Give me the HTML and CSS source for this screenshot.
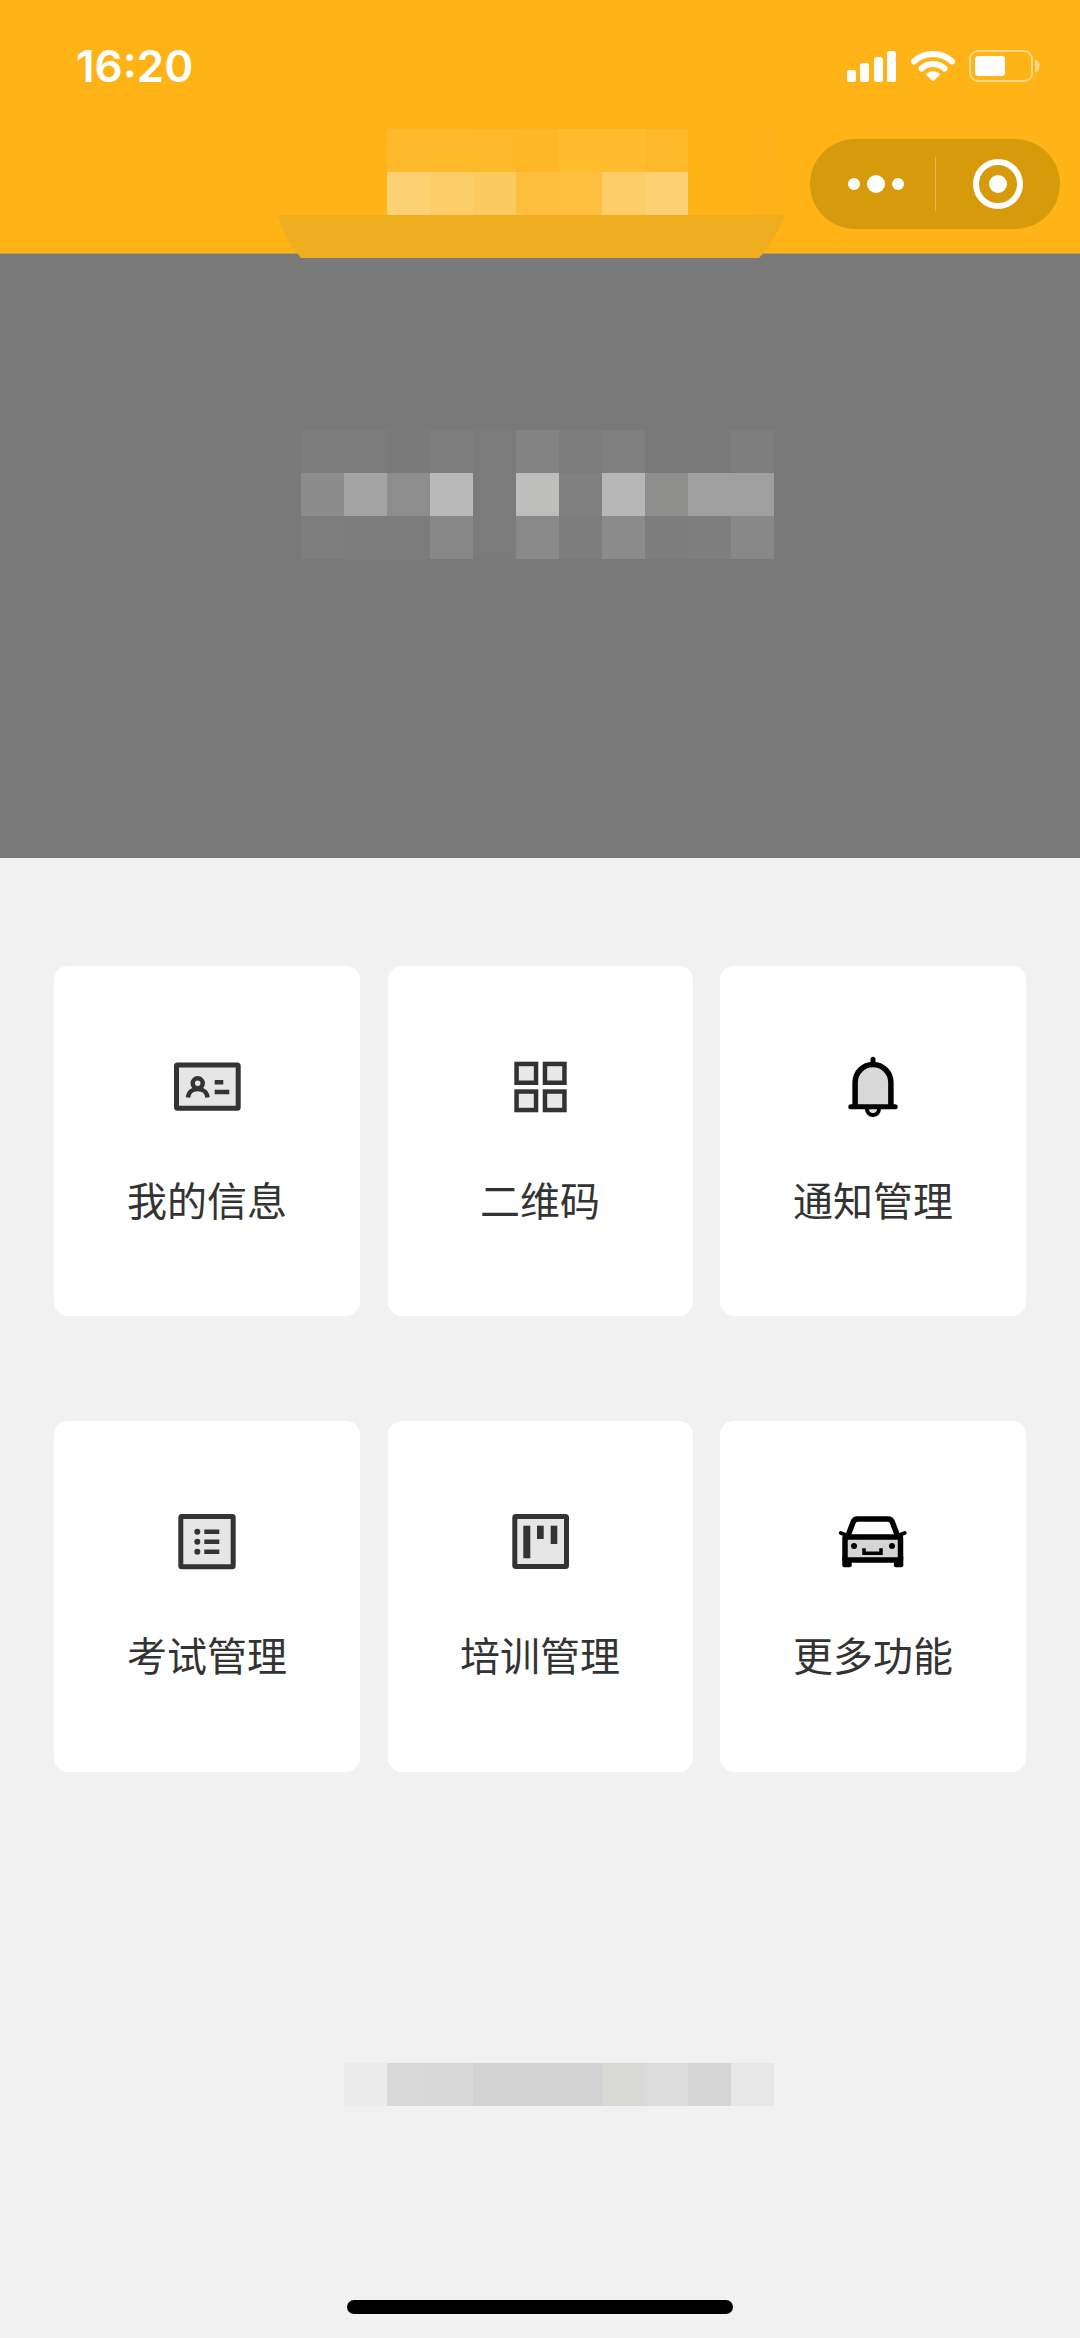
FILE: index.html
```html
<!DOCTYPE html>
<html lang="zh-CN">
<head>
<meta charset="utf-8">
<title>功能菜单</title>
<link rel="stylesheet" href="styles.css">
</head>
<body>
<div class="page">
  <header class="header">
    <div class="status">
      <span class="time">16:20</span>
      <div class="status-icons">
        <svg class="signal" width="49" height="31" viewBox="0 0 49 31"><rect x="0" y="19" width="9" height="12" rx="2.500"/><rect x="13" y="12" width="9" height="19" rx="2.500"/><rect x="27" y="6" width="9" height="25" rx="2.500"/><rect x="40" y="0" width="9" height="31" rx="2.500"/></svg>
        <svg class="wifi" width="44" height="32" viewBox="0 0 44 32"><path class="wifi-arc" d="M3 11.500C13.500 1.500 30.500 1.500 41 11.500"/><path class="wifi-arc" d="M10.500 18.500C17 12.500 27 12.500 33.500 18.500"/><path class="wifi-dot" d="M22 31.500 14.500 24.200C18.800 20.300 25.200 20.300 29.500 24.200Z"/></svg>
        <svg class="battery" width="71" height="32" viewBox="0 0 71 32"><rect class="bat-case" x="1" y="1" width="62" height="30" rx="8"/><rect class="bat-fill" x="6" y="6" width="30" height="20" rx="3.500"/><path class="bat-nub" d="M66 9.500C69 10.500 70.500 13 70.500 16S69 21.500 66 22.500Z"/></svg>
      </div>
    </div>
    <div class="nav">
      <div class="capsule">
        <div class="cap-more"><i class="dot"></i><i class="dot dot-big"></i><i class="dot"></i></div>
        <div class="cap-line"></div>
        <div class="cap-close"><i class="ring"></i></div>
      </div>
    </div>
    <div class="ship">
      <svg class="ship-shade" width="30" height="86" viewBox="0 0 30 86"><path d="M0 0H19C25 25 29 60 28 86H0Z"/></svg>
      <div class="mosaic ship-mosaic">
        <span class="y1"></span><span class="y1"></span><span class="y2"></span><span class="y3"></span><span class="y4"></span><span class="y4"></span><span class="y2"></span>
        <span class="y5"></span><span class="y6"></span><span class="y7"></span><span class="y8"></span><span class="y9"></span><span class="y6"></span><span class="y5"></span>
      </div>
      <svg class="hull" width="508" height="43" viewBox="0 0 508 43"><path d="M0 0H508C501 18 493 31 482 43H24C14 31 6 18 0 0Z"/></svg>
    </div>
  </header>

  <section class="hero">
    <div class="mosaic hero-mosaic">
      <span class="g7c"></span><span class="g7c"></span><span class="g7a"></span><span class="g7e"></span><span class="g7b"></span><span class="g83"></span><span class="g7c"></span><span class="g80"></span><span class="g7a"></span><span class="g7a"></span><span class="g7e"></span>
      <span class="g8c"></span><span class="ga4"></span><span class="g8d"></span><span class="gb9"></span><span class="g7b"></span><span class="gbd"></span><span class="g80"></span><span class="gb7"></span><span class="g8e"></span><span class="g9f"></span><span class="g9f"></span>
      <span class="g7e"></span><span class="g7c"></span><span class="g7c"></span><span class="g88"></span><span class="g7b"></span><span class="g89"></span><span class="g7d"></span><span class="g8b"></span><span class="g7d"></span><span class="g7f"></span><span class="g88"></span>
    </div>
  </section>

  <main class="menu">
    <a class="card">
      <svg class="icon" viewBox="0 0 72 72"><rect class="s-dark" x="5.500" y="14" width="61.700" height="43.200" rx="1"/><circle class="thin" cx="26.700" cy="32.300" r="5"/><path class="thin" d="M17 46.500C17.500 41 21.500 38 26.700 38S36 41 36.500 46.500"/><path class="thin" d="M43.700 31.300H52.300M43.700 41H58.300"/></svg>
      <span class="label">我的信息</span>
    </a>
    <a class="card">
      <svg class="icon" viewBox="0 0 72 72"><rect class="s-grid" x="12.550" y="12.950" width="19.500" height="18.800"/><rect class="s-grid" x="40.950" y="12.950" width="19.500" height="18.800"/><rect class="s-grid" x="12.550" y="40.550" width="19.500" height="18.500"/><rect class="s-grid" x="40.950" y="40.550" width="19.500" height="18.500"/></svg>
      <span class="label">二维码</span>
    </a>
    <a class="card">
      <svg class="icon" viewBox="0 0 72 72"><path class="clapper" d="M30 58a6 6 0 0 0 12 0"/><path class="bell" d="M18.100 55.800V31.400A17.900 17.900 0 0 1 53.900 31.400V55.800"/><path class="bell-bar" d="M13.800 55.800H58.200M36 8.200V13"/></svg>
      <span class="label">通知管理</span>
    </a>
    <a class="card">
      <svg class="icon" viewBox="0 0 72 72"><rect class="s-dark" x="9.800" y="10.500" width="52.400" height="50.300" rx="1"/><circle class="solid" cx="26.300" cy="25.700" r="3"/><circle class="solid" cx="26.300" cy="35.700" r="3"/><circle class="solid" cx="26.300" cy="45.700" r="3"/><path class="thin" d="M33.300 25.700H48.300M33.300 35.700H48.300M33.300 45.700H48.300"/></svg>
      <span class="label">考试管理</span>
    </a>
    <a class="card">
      <svg class="icon" viewBox="0 0 72 72"><rect class="s-dark" x="10.800" y="10.500" width="51.700" height="50" rx="1"/><rect class="solid" x="19.300" y="19.700" width="7" height="32.600"/><rect class="solid" x="33" y="19.700" width="6.700" height="13.300"/><rect class="solid" x="46.700" y="19.700" width="6.600" height="18.300"/></svg>
      <span class="label">培训管理</span>
    </a>
    <a class="card">
      <svg class="icon" viewBox="0 0 72 72"><rect class="black" x="5.300" y="49" width="9.400" height="12.300" rx="2"/><rect class="black" x="56.900" y="49" width="9.400" height="12.300" rx="2"/><rect class="car-body" x="8" y="31" width="55.500" height="23" rx="1"/><path class="car-line" d="M10.500 31 16 16.500Q17.200 13 20.500 13H51Q54.300 13 55.500 16.500L61 31"/><path class="mirror" d="M3.800 27 9 29M67.700 27 62.500 29"/><circle class="black" cx="17" cy="40" r="3"/><circle class="black" cx="55" cy="40" r="3"/><path class="smile" d="M27 42.300V47.300H44V42.300"/></svg>
      <span class="label">更多功能</span>
    </a>
  </main>

  <div class="foot">
    <div class="mosaic foot-mosaic">
      <span class="fec"></span><span class="fd8"></span><span class="fd7"></span><span class="fd2"></span><span class="fd3"></span><span class="fd3"></span><span class="fd9"></span><span class="fdb"></span><span class="fd5"></span><span class="fe7"></span>
    </div>
  </div>

  <div class="home-bar"><div class="home-indicator"></div></div>
</div>
</body>
</html>
```

FILE: styles.css
```css
* { box-sizing: border-box; }
html, body { margin: 0; padding: 0; }
body { background: #f1f1f1; font-family: "Noto Sans CJK SC", "Noto Sans", sans-serif; }
.page { width: 1080px; height: 2338px; display: flex; flex-direction: column; overflow: hidden; background: #f1f1f1; }

/* header */
.header { position: relative; height: 254px; flex: none; background: #ffb316; border-bottom: 1px solid #b89a5c; padding-top: 50px; }
.status { display: flex; justify-content: space-between; align-items: center; height: 32px; padding: 0 40px 0 76px; }
.time { font-family: Inter, "Liberation Sans", sans-serif; font-weight: 600; font-size: 44px; line-height: 32px; color: #fff; }
.status-icons { display: flex; align-items: center; }
.signal { margin-right: 15px; }
.wifi { margin-right: 14px; }
.signal rect { fill: #fff; }
.wifi-arc { fill: none; stroke: #fff; stroke-width: 6; stroke-linecap: round; }
.wifi-dot { fill: #fff; }
.bat-case { fill: none; stroke: #ffd98a; stroke-width: 2; }
.bat-fill { fill: #fff; }
.bat-nub { fill: #ffd98a; }

.nav { display: flex; justify-content: flex-end; padding: 57px 20px 0 0; }
.capsule { width: 250px; height: 90px; border-radius: 45px; background: #d79a0b; display: flex; align-items: center; }
.cap-more { width: 125px; display: flex; justify-content: center; align-items: center; gap: 7px; padding-left: 6px; }
.dot { display: block; width: 12px; height: 12px; border-radius: 50%; background: #fff; }
.dot-big { width: 18px; height: 18px; }
.cap-line { width: 1px; height: 54px; background: #e5b354; }
.cap-close { flex: 1; display: flex; justify-content: center; }
.ring { display: flex; align-items: center; justify-content: center; width: 50px; height: 50px; border-radius: 50%; border: 6px solid #fff; }
.ring::after { content: ""; width: 18px; height: 18px; border-radius: 50%; background: #fff; }

.ship { position: absolute; left: 277px; top: 129px; width: 508px; z-index: 2; }
.ship-shade { position: absolute; top: 0; right: 0; fill: #fcb218; }
.hull { display: block; fill: #efae1f; }

/* mosaics */
.mosaic { display: grid; grid-auto-rows: 43px; }
.mosaic span { display: block; }
.ship-mosaic { grid-template-columns: repeat(7, 43px); width: 301px; margin-left: 110px; position: relative; }
.hero-mosaic { grid-template-columns: repeat(11, 43px); }
.foot-mosaic { grid-template-columns: repeat(10, 43px); }

.y1 { background: #ffba2b; } .y2 { background: #feb92a; } .y3 { background: #feb727; } .y4 { background: #ffbc2c; }
.y5 { background: #fbd174; } .y6 { background: #fcce68; } .y7 { background: #fbcb62; } .y8 { background: #fdbd3f; } .y9 { background: #febe40; }

.g7a { background: #7a7a7a; } .g7b { background: #7b7b7b; } .g7c { background: #7c7c7c; } .g7d { background: #7d7d7d; }
.g7e { background: #7e7e7e; } .g7f { background: #7f7f7f; } .g80 { background: #808080; } .g83 { background: #838383; }
.g88 { background: #888888; } .g89 { background: #898989; } .g8b { background: #8b8b8b; } .g8c { background: #8c8c8c; }
.g8d { background: #8d8d8d; } .g8e { background: #8e8e8c; } .g9f { background: #9f9f9f; } .ga4 { background: #a4a4a4; }
.gb7 { background: #b7b7b7; } .gb9 { background: #b9b9b9; } .gbd { background: #bdbdbb; }

.fec { background: #ececec; } .fd8 { background: #d8d8d8; } .fd7 { background: #d7d7d7; } .fd2 { background: #d2d2d2; }
.fd3 { background: #d3d3d3; } .fd9 { background: #d9d9d6; } .fdb { background: #dbdbdb; } .fd5 { background: #d5d5d5; } .fe7 { background: #e7e7e7; }

/* hero */
.hero { height: 604px; flex: none; background: #797979; padding: 176px 0 0 301px; }

/* menu */
.menu { display: grid; grid-template-columns: 306px 305px 306px; grid-template-rows: 350px 351px; column-gap: 27.5px; row-gap: 105px; padding: 108px 54px 0; }
.card { background: #fff; border-radius: 14px; display: flex; flex-direction: column; align-items: center; padding-top: 85px; }
.icon { display: block; width: 72px; height: 72px; flex: none; }
.label { margin-top: 48px; font-size: 40px; line-height: 56px; color: #333; font-weight: 400; white-space: nowrap; }

.s-dark { fill: #e6e6e6; stroke: #333; stroke-width: 5; }
.s-grid { fill: #e8e8e8; stroke: #333; stroke-width: 4.500; }
.thin { fill: none; stroke: #333; stroke-width: 4.500; }
.solid { fill: #333; stroke: none; }
.black { fill: #000; }
.bell { fill: #d8d8d8; stroke: #000; stroke-width: 5.500; }
.bell-bar { fill: none; stroke: #000; stroke-width: 5; stroke-linecap: round; }
.clapper { fill: #e4e4e4; stroke: #000; stroke-width: 4; }
.car-body { fill: #d4d4d4; stroke: #000; stroke-width: 5.500; }
.car-line { fill: none; stroke: #000; stroke-width: 5.500; stroke-linejoin: round; }
.mirror { fill: none; stroke: #000; stroke-width: 4; stroke-linecap: round; }
.smile { fill: none; stroke: #000; stroke-width: 3.500; }

/* footer */
.foot { display: flex; padding: 291px 0 0 344px; }
.home-bar { display: flex; justify-content: center; padding-top: 194px; }
.home-indicator { width: 386px; height: 14px; border-radius: 7px; background: #000; }
```
